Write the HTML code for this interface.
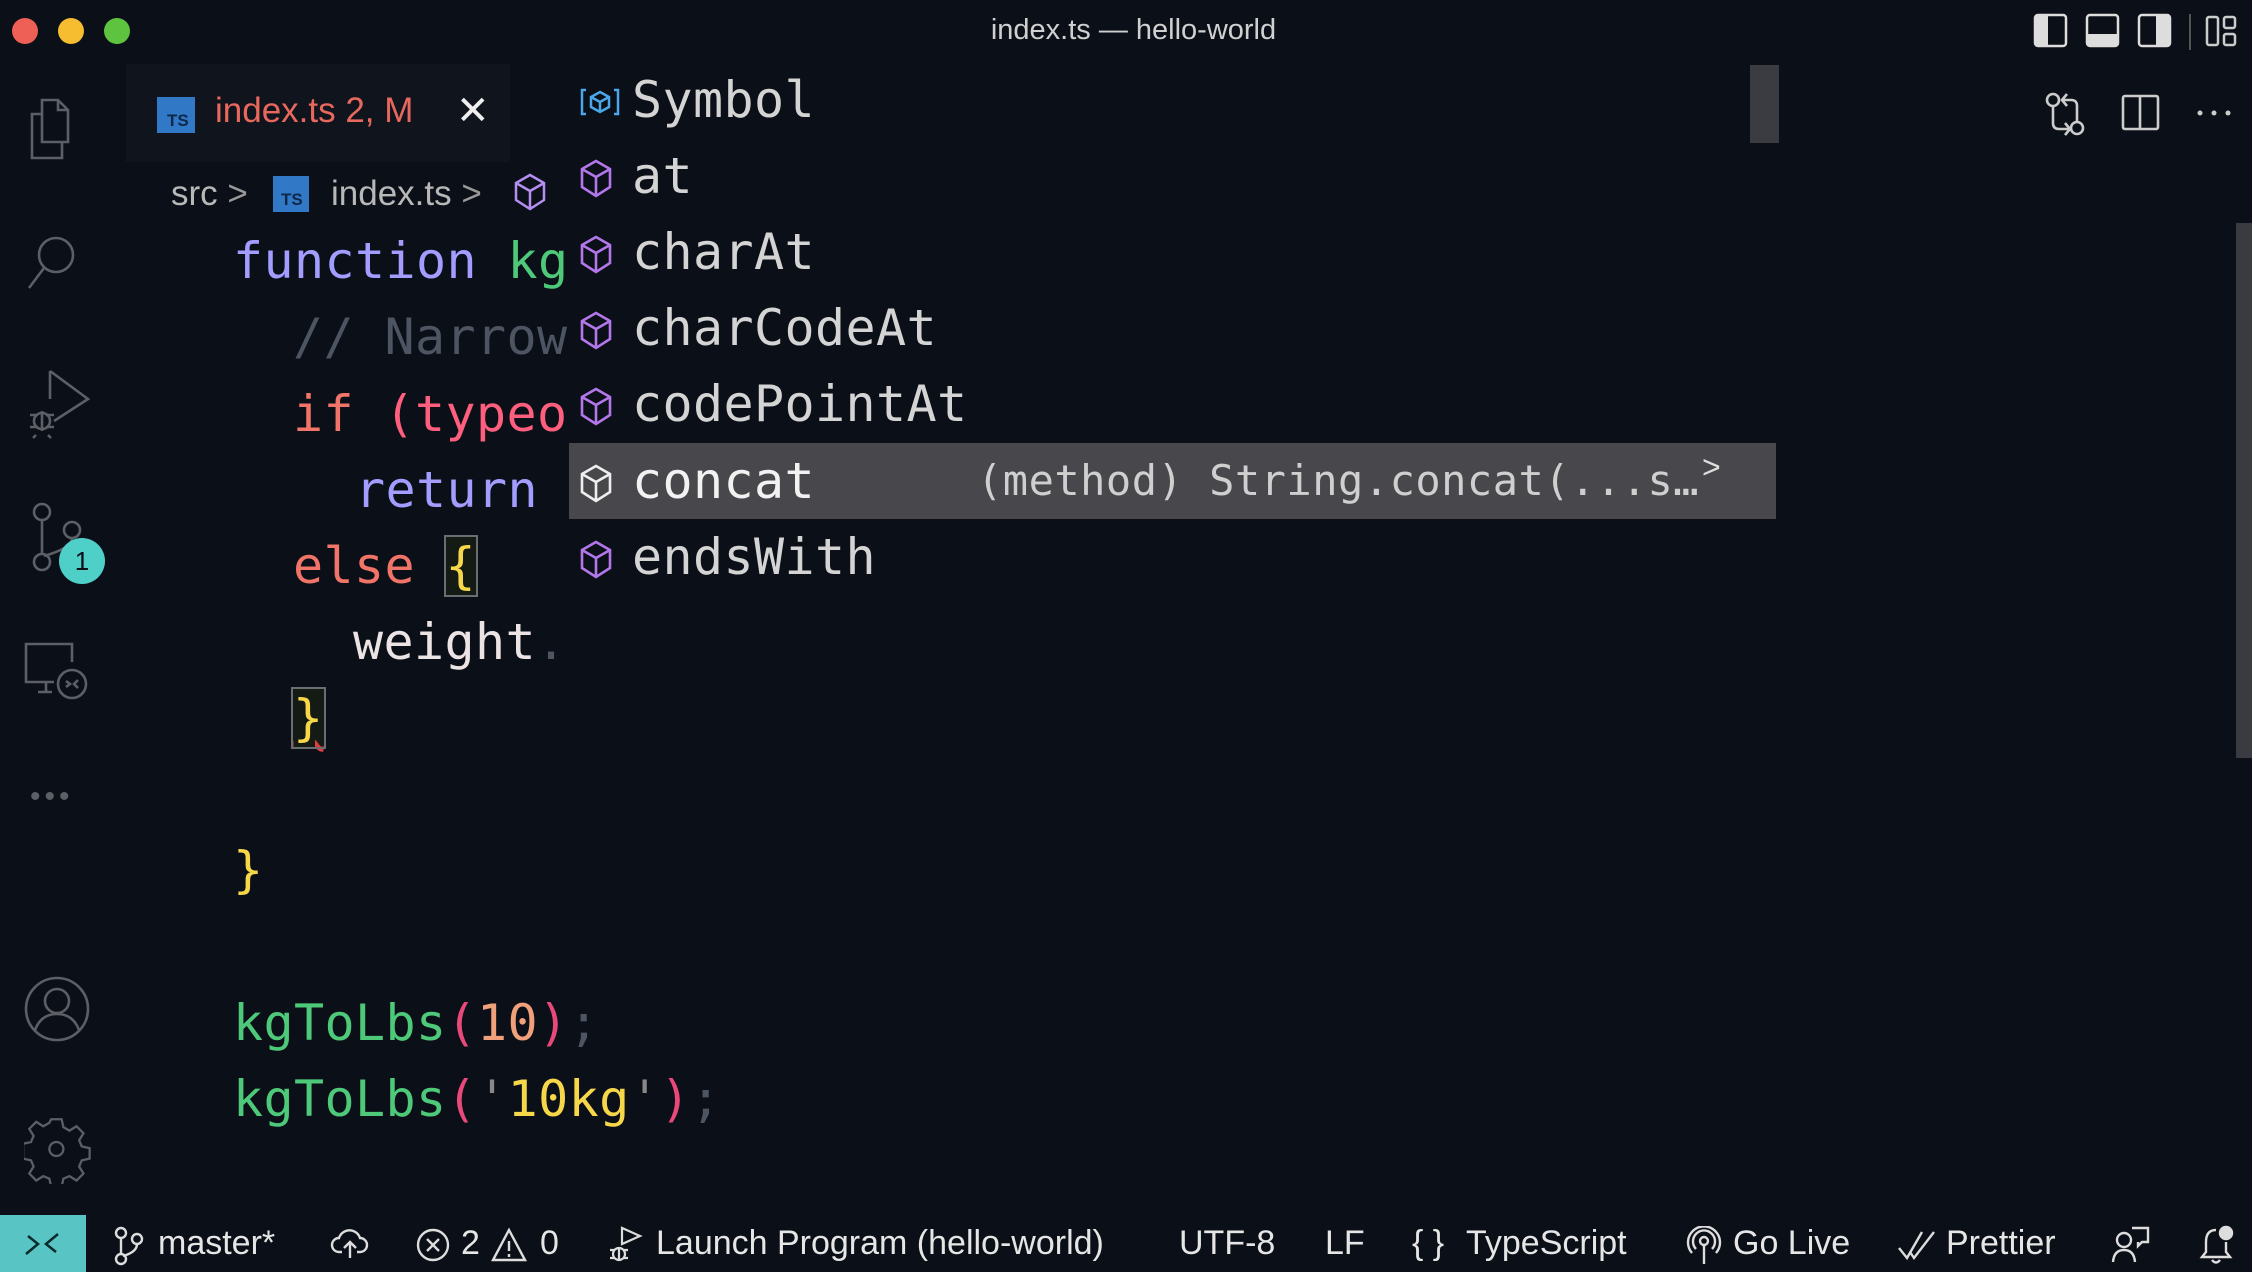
<!DOCTYPE html>
<html><head><meta charset="utf-8"><style>
*{margin:0;padding:0;box-sizing:border-box}
body{width:2252px;height:1272px;background:#0b0f17;overflow:hidden;position:relative;font-family:"Liberation Sans",sans-serif;color:#ccc}
.a{position:absolute}
.code{position:absolute;font-family:"DejaVu Sans Mono","Liberation Mono",monospace;font-size:50px;letter-spacing:0.4px;line-height:76px;white-space:pre}
.ic{position:absolute;fill:none;stroke:#5c5f66;stroke-width:2.6}
.sg{position:absolute;left:569px;top:62px;width:1211px;height:540px;background:#0b0f17}
.row{position:absolute;left:0;width:1207px;height:76px;font-family:"DejaVu Sans Mono",monospace;font-size:50px;letter-spacing:0.4px;line-height:76px;color:#d4d4d4;white-space:pre}
.row .t{position:absolute;left:63px}
.row svg{position:absolute;left:10px;top:20px}
.sb{position:absolute;top:1215px;font-size:34px;color:#e6e6e6;line-height:57px;white-space:pre}
</style></head><body>
<div class="a" style="left:0;top:0;width:2252px;height:62px;background:#0b0f17"></div>
<div class="a" style="left:12px;top:18px;width:26px;height:26px;border-radius:50%;background:#ee5f56"></div>
<div class="a" style="left:58px;top:18px;width:26px;height:26px;border-radius:50%;background:#f5bd2f"></div>
<div class="a" style="left:104px;top:18px;width:26px;height:26px;border-radius:50%;background:#5ec43f"></div>
<div class="a" style="left:0;top:14px;width:2252px;text-align:center;font-size:29px;color:#d0d0d0;padding-left:15px">index.ts — hello-world</div>
<svg class="a" style="left:2030px;top:12px" width="220" height="40" viewBox="0 0 220 40">
<rect x="5" y="3" width="31" height="31" rx="3" fill="none" stroke="#ddd" stroke-width="2.5"/><rect x="5" y="3" width="13" height="31" rx="2" fill="#ddd"/>
<rect x="57" y="3" width="31" height="31" rx="3" fill="none" stroke="#ddd" stroke-width="2.5"/><rect x="57" y="22" width="31" height="12" rx="2" fill="#ddd"/>
<rect x="109" y="3" width="31" height="31" rx="3" fill="none" stroke="#ddd" stroke-width="2.5"/><rect x="126" y="3" width="14" height="31" rx="2" fill="#ddd"/>
<line x1="160" y1="2" x2="160" y2="38" stroke="#555" stroke-width="2"/>
<rect x="177" y="5" width="11" height="28" rx="2" fill="none" stroke="#ccc" stroke-width="2.5"/><rect x="194" y="5" width="11" height="11" rx="2" fill="none" stroke="#ccc" stroke-width="2.5"/><rect x="194" y="22" width="11" height="11" rx="2" fill="none" stroke="#ccc" stroke-width="2.5"/>
</svg>
<svg class="a" style="left:2040px;top:90px" width="200" height="50" viewBox="0 0 200 50" fill="none" stroke="#ccc" stroke-width="2.6">
<circle cx="13" cy="10" r="6"/><path d="M13 16v17q0 6 6 6h10M25 33l5 6-5 6"/><circle cx="37" cy="38" r="6"/><path d="M37 32V16q0-6-6-6h-8M27 4l-5 6 5 6"/>
<rect x="83" y="6" width="35" height="33" rx="2"/><line x1="100" y1="6" x2="100" y2="39"/>
<circle cx="160" cy="23" r="2.5" fill="#ccc" stroke="none"/><circle cx="174" cy="23" r="2.5" fill="#ccc" stroke="none"/><circle cx="188" cy="23" r="2.5" fill="#ccc" stroke="none"/>
</svg>
<svg class="ic" style="left:20px;top:92px" width="70" height="80"><path d="M22 8h16l10 10v32H22zM38 8v10h10M22 22H12v44h30V50"/></svg>
<svg class="ic" style="left:20px;top:225px" width="70" height="80"><circle cx="36" cy="30" r="17"/><line x1="24" y1="43" x2="9" y2="63"/></svg>
<svg class="ic" style="left:20px;top:365px" width="80" height="80"><path d="M30 6v28M30 6l38 28-34 22"/><circle cx="22" cy="56" r="8"/><path d="M10 50h8M10 62h8M26 50h8M26 62h8M16 70l-3 3M28 70l3 3M22 46v20"/></svg>
<svg class="ic" style="left:20px;top:500px" width="80" height="80"><circle cx="22" cy="12" r="8"/><circle cx="52" cy="30" r="8"/><circle cx="22" cy="62" r="8"/><path d="M22 20v34M52 38q0 10-28 18"/></svg>
<div class="a" style="left:59px;top:538px;width:46px;height:46px;border-radius:50%;background:#4ed0c9;color:#0b0f17;font-size:26px;text-align:center;line-height:46px">1</div>
<svg class="ic" style="left:20px;top:638px" width="80" height="80"><path d="M52 24V6H6v38h28M18 54h14M26 44v10"/><circle cx="52" cy="46" r="14"/><path d="M46 43l4 3-4 3M58 42l-4 4 4 4"/></svg>
<div class="a" style="left:30px;top:780px;font-size:30px;color:#5c5f66;letter-spacing:4px">•••</div>
<svg class="ic" style="left:20px;top:972px" width="80" height="80"><circle cx="37" cy="37" r="31"/><circle cx="37" cy="29" r="12"/><path d="M15 58q6-16 22-16t22 16"/></svg>
<svg class="ic" style="left:24px;top:1114px" width="70" height="70" viewBox="0 0 80 80"><path d="M31 6h12l2 9 7 4 8-5 8 8-5 8 3 7 9 2v12l-9 2-3 7 5 8-8 8-8-5-7 3-2 9H31l-2-9-7-3-8 5-8-8 5-8-3-7-9-2V34l9-2 3-7-5-8 8-8 8 5 7-4z"/><circle cx="37" cy="40" r="8"/></svg>
<div class="a" style="left:126px;top:64px;width:384px;height:98px;background:#10141c"></div>
<div class="a" style="left:157px;top:97px;width:38px;height:36px;background:#3179c6;color:#0d2848;font-size:17px;font-weight:bold;padding:15px 0 0 10px;line-height:18px">TS</div>
<div class="a" style="left:215px;top:91px;font-size:35px;color:#e8685e">index.ts 2, M</div>
<div class="a" style="left:456px;top:88px;font-size:40px;color:#eee">✕</div>
<div class="a" style="left:171px;top:174px;font-size:35px;color:#b8b8b8;white-space:pre">src <span style="color:#999">&gt;</span></div>
<div class="a" style="left:273px;top:176px;width:36px;height:36px;background:#3179c6;color:#0d2848;font-size:17px;font-weight:bold;padding:15px 0 0 8px;line-height:18px">TS</div>
<div class="a" style="left:331px;top:174px;font-size:35px;color:#b8b8b8;white-space:pre">index.ts <span style="color:#999">&gt;</span></div>
<svg class="a" style="left:512px;top:172px" width="36" height="40" viewBox="0 0 36 40" fill="none" stroke="#b48ef0" stroke-width="2.5"><path d="M18 3l14 8v17l-14 9-14-9V11zM4 11l14 8 14-8M18 19v18"/></svg>
<div class="code" style="left:233px;top:223px"><span style="color:#a29dff">function</span> <span style="color:#4ec97a">kg</span></div>
<div class="code" style="left:293px;top:299px;color:#4d5563">// Narrow</div>
<div class="code" style="left:293px;top:376px"><span style="color:#f07468">if</span> <span style="color:#ff5f7e">(typeo</span></div>
<div class="code" style="left:355px;top:452px;color:#a29dff">return</div>
<div class="code" style="left:293px;top:528px"><span style="color:#f07468">else</span> <span style="color:#f7d74a;outline:2px solid #6a6e70;background:#141a14">{</span></div>
<div class="code" style="left:353px;top:604px"><span style="color:#ece4e4">weight</span><span style="color:#4d5563">.</span></div>
<div class="code" style="left:293px;top:680px"><span style="color:#f7d74a;outline:2px solid #6a6e70;background:#141a14;text-decoration:underline wavy #e03c3c">}</span></div>
<div class="code" style="left:233px;top:832px;color:#f7d74a">}</div>
<div class="code" style="left:233px;top:985px"><span style="color:#4ec97a">kgToLbs</span><span style="color:#e8487a">(</span><span style="color:#f0a07a">10</span><span style="color:#e8487a">)</span><span style="color:#4d5563">;</span></div>
<div class="code" style="left:233px;top:1061px"><span style="color:#4ec97a">kgToLbs</span><span style="color:#e8487a">(</span><span style="color:#f7d74a"><span style="color:#888">'</span>10kg<span style="color:#888">'</span></span><span style="color:#e8487a">)</span><span style="color:#4d5563">;</span></div>
<div class="sg">
<div class="a" style="left:1181px;top:3px;width:29px;height:78px;background:#3b3c42"></div>
<div class="row" style="top:0"><svg width="42" height="40" viewBox="0 0 42 40" fill="none" stroke="#4aa8e8" stroke-width="2.5"><path d="M7 8H3v24h4M35 8h4v24h-4"/><path d="M21 10l9 5v10l-9 5-9-5V15zM12 15l9 5 9-5M21 20v10"/></svg><span class="t">Symbol</span></div>
<div class="row" style="top:76px"><svg width="40" height="40" viewBox="0 0 40 40" fill="none" stroke="#b377ea" stroke-width="2.6"><path d="M17 3l14 8v18l-14 9-14-9V11zM3 11l14 8 14-8M17 19v19"/></svg><span class="t">at</span></div>
<div class="row" style="top:152px"><svg width="40" height="40" viewBox="0 0 40 40" fill="none" stroke="#b377ea" stroke-width="2.6"><path d="M17 3l14 8v18l-14 9-14-9V11zM3 11l14 8 14-8M17 19v19"/></svg><span class="t">charAt</span></div>
<div class="row" style="top:228px"><svg width="40" height="40" viewBox="0 0 40 40" fill="none" stroke="#b377ea" stroke-width="2.6"><path d="M17 3l14 8v18l-14 9-14-9V11zM3 11l14 8 14-8M17 19v19"/></svg><span class="t">charCodeAt</span></div>
<div class="row" style="top:304px"><svg width="40" height="40" viewBox="0 0 40 40" fill="none" stroke="#b377ea" stroke-width="2.6"><path d="M17 3l14 8v18l-14 9-14-9V11zM3 11l14 8 14-8M17 19v19"/></svg><span class="t">codePointAt</span></div>
<div class="row" style="top:381px;background:#48484c;color:#f2f2f2"><svg width="40" height="40" viewBox="0 0 40 40" fill="none" stroke="#eee" stroke-width="2.6"><path d="M17 3l14 8v18l-14 9-14-9V11zM3 11l14 8 14-8M17 19v19"/></svg><span class="t">concat</span><span class="a" style="left:408px;font-size:42px;letter-spacing:0.5px;color:#cfcfcf">(method) String.concat(...s…</span><span class="a" style="left:1133px;top:-14px;font-size:32px;color:#ddd;font-family:'Liberation Sans'">&gt;</span></div>
<div class="row" style="top:457px"><svg width="40" height="40" viewBox="0 0 40 40" fill="none" stroke="#b377ea" stroke-width="2.6"><path d="M17 3l14 8v18l-14 9-14-9V11zM3 11l14 8 14-8M17 19v19"/></svg><span class="t">endsWith</span></div>
</div>
<div class="a" style="left:2236px;top:223px;width:16px;height:535px;background:#393b41"></div>
<div class="a" style="left:0;top:1215px;width:2252px;height:57px;background:#0b0f17"></div>
<div class="a" style="left:0;top:1215px;width:86px;height:57px;background:#58c4c4"></div>
<svg class="a" style="left:22px;top:1228px" width="40" height="32" viewBox="0 0 40 32" fill="none" stroke="#0b2a2a" stroke-width="2.5"><path d="M4 26l12-10-10-8M36 6L24 16l10 8"/></svg>
<svg class="a" style="left:112px;top:1226px" width="34" height="40" viewBox="0 0 34 40" fill="none" stroke="#ddd" stroke-width="2.4"><circle cx="9" cy="7" r="5"/><circle cx="25" cy="13" r="5"/><circle cx="9" cy="33" r="5"/><path d="M9 12v16M25 18q0 8-14 12"/></svg>
<div class="sb" style="left:158px">master*</div>
<svg class="a" style="left:330px;top:1228px" width="40" height="34" viewBox="0 0 40 34" fill="none" stroke="#ddd" stroke-width="2.4"><path d="M12 24H9a7 7 0 010-14 11 11 0 0121 0 7 7 0 010 14h-3M20 30V14M14 20l6-6 6 6"/></svg>
<svg class="a" style="left:414px;top:1226px" width="38" height="38" viewBox="0 0 38 38" fill="none" stroke="#ddd" stroke-width="2.4"><circle cx="19" cy="19" r="15"/><path d="M13 13l12 12M25 13L13 25"/></svg>
<div class="sb" style="left:461px">2</div>
<svg class="a" style="left:490px;top:1226px" width="38" height="38" viewBox="0 0 38 38" fill="none" stroke="#ddd" stroke-width="2.4"><path d="M19 4L3 34h32zM19 15v10M19 28v3"/></svg>
<div class="sb" style="left:540px">0</div>
<svg class="a" style="left:606px;top:1224px" width="40" height="42" viewBox="0 0 40 42" fill="none" stroke="#ddd" stroke-width="2.2"><path d="M16 4v16l18-8z"/><circle cx="13" cy="30" r="6"/><path d="M4 26h4M4 34h4M18 26h4M18 34h4M13 24v12"/></svg>
<div class="sb" style="left:656px">Launch Program (hello-world)</div>
<div class="sb" style="left:1179px">UTF-8</div>
<div class="sb" style="left:1325px">LF</div>
<div class="sb" style="left:1412px">{ }</div>
<div class="sb" style="left:1466px">TypeScript</div>
<svg class="a" style="left:1686px;top:1226px" width="36" height="40" viewBox="0 0 36 40" fill="none" stroke="#ddd" stroke-width="2.4"><circle cx="18" cy="15" r="4"/><path d="M18 19v19M10 23a11 11 0 1116 0M6 27a16 16 0 1124 0"/></svg>
<div class="sb" style="left:1733px">Go Live</div>
<svg class="a" style="left:1896px;top:1228px" width="42" height="36" viewBox="0 0 42 36" fill="none" stroke="#ddd" stroke-width="2.4"><path d="M3 20l8 10L26 4M14 24l4 6L38 4"/></svg>
<div class="sb" style="left:1946px">Prettier</div>
<svg class="a" style="left:2110px;top:1224px" width="42" height="42" viewBox="0 0 42 42" fill="none" stroke="#ddd" stroke-width="2.4"><circle cx="14" cy="16" r="7"/><path d="M3 38q1-12 11-12t11 12M22 4h16v14h-6l-4 4v-4"/></svg>
<svg class="a" style="left:2196px;top:1222px" width="44" height="44" viewBox="0 0 44 44" fill="none" stroke="#ddd" stroke-width="2.4"><path d="M20 8q-10 0-10 12v10l-4 5h28l-4-5V20M16 38q4 5 8 0"/><circle cx="30" cy="11" r="6" fill="#ddd"/></svg>
</body></html>
